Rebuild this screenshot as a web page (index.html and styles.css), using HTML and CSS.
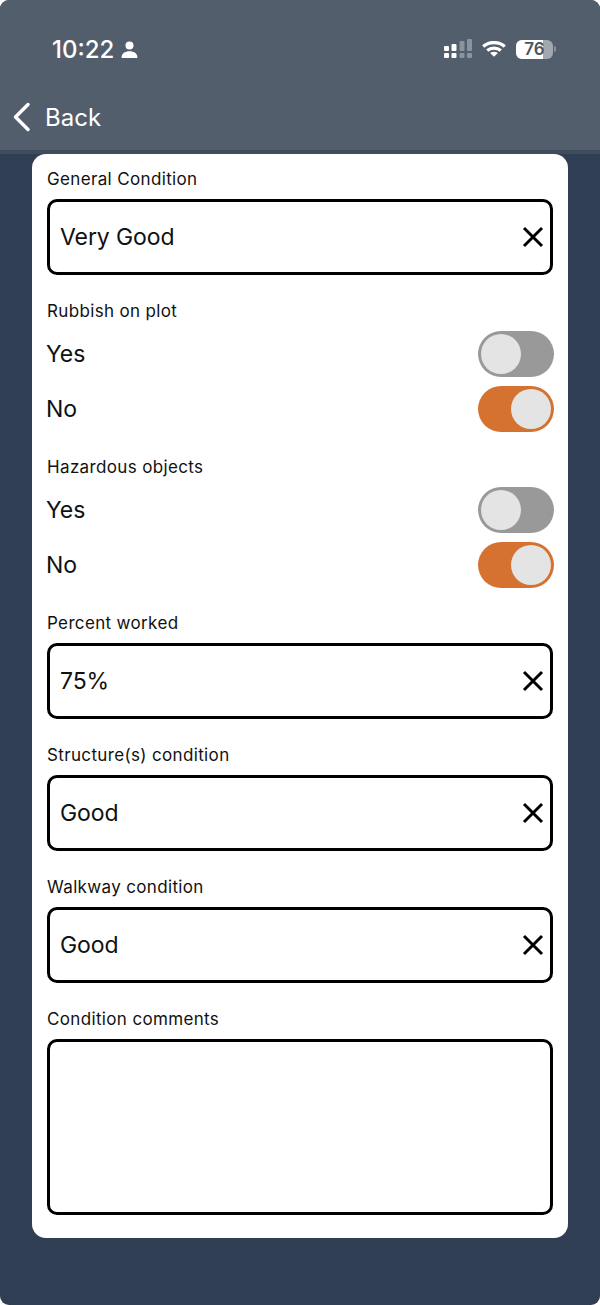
FILE: index.html
```html
<!DOCTYPE html>
<html lang="en">
<head>
  <meta charset="UTF-8">
  <meta name="viewport" content="width=device-width, initial-scale=1.0">
  <title>Condition</title>
  <link rel="stylesheet" href="styles.css">
</head>
<body>
  <div class="screen">
    <header class="topbar">
      <div class="status">
        <div class="status-left">
          <span class="time">10:22</span>
          <svg class="person" width="17" height="17" viewBox="0 0 17 17"><circle cx="8.5" cy="4.6" r="4" fill="#fff"/><path d="M.6 16.4c0-4 3.4-6.2 7.9-6.2s7.900 2.200 7.900 6.200c0 .4-.3.6-.7.6H1.300c-.4 0-.7-.2-.7-.6z" fill="#fff"/></svg>
        </div>
        <div class="status-right">
          <svg width="29" height="20" viewBox="-1 0 29 20">
            <g fill="#fff">
              <rect x="0" y="7" width="5" height="5" rx="1"/>
              <rect x="0" y="14" width="5" height="5" rx="1"/>
              <rect x="7.500" y="5" width="5" height="7" rx="1"/>
              <rect x="7.500" y="14" width="5" height="5" rx="1"/>
            </g>
            <g fill="#8b939e">
              <rect x="15.500" y="2" width="5" height="10" rx="1"/>
              <rect x="15.500" y="14" width="5" height="5" rx="1"/>
              <rect x="23" y="0" width="5" height="12" rx="1"/>
              <rect x="23" y="14" width="5" height="5" rx="1"/>
            </g>
          </svg>
          <svg class="wifi" width="24" height="16" viewBox="0 0 24 16" fill="none" stroke="#fff" stroke-width="3.200">
            <path d="M1.200 5.400C7.300.3 16.700.3 22.800 5.400"/>
            <path d="M5.200 9.500c3.900-3.200 9.700-3.200 13.600 0"/>
            <path d="M12 15.800l-3.900-3.900c2.300-1.600 5.500-1.600 7.800 0z" fill="#fff" stroke="none"/>
          </svg>
          <div class="battery">
            <div class="battery-body"><span class="battery-fill"></span><span class="battery-num">76</span></div>
            <span class="battery-tip"></span>
          </div>
        </div>
      </div>
      <div class="nav">
        <svg width="20" height="30" viewBox="0 0 20 30" fill="none" stroke="#fff" stroke-width="3.500" stroke-linecap="round" stroke-linejoin="round"><path d="M16 2.500L3.500 15 16 27.500"/></svg>
        <span class="back">Back</span>
      </div>
    </header>

    <main class="card">
      <section class="field">
        <label class="label">General Condition</label>
        <div class="input tall">
          <span>Very Good</span>
          <svg class="clear" width="22" height="22" viewBox="0 0 22 22"><path d="M2 2l18 18M20 2L2 20"/></svg>
        </div>
      </section>

      <section class="field">
        <label class="label">Rubbish on plot</label>
        <div class="options">
          <div class="option"><span>Yes</span><span class="toggle"><span class="knob"></span></span></div>
          <div class="option"><span>No</span><span class="toggle on"><span class="knob"></span></span></div>
        </div>
      </section>

      <section class="field">
        <label class="label">Hazardous objects</label>
        <div class="options">
          <div class="option"><span>Yes</span><span class="toggle"><span class="knob"></span></span></div>
          <div class="option"><span>No</span><span class="toggle on"><span class="knob"></span></span></div>
        </div>
      </section>

      <section class="field">
        <label class="label">Percent worked</label>
        <div class="input">
          <span>75%</span>
          <svg class="clear" width="22" height="22" viewBox="0 0 22 22"><path d="M2 2l18 18M20 2L2 20"/></svg>
        </div>
      </section>

      <section class="field">
        <label class="label">Structure(s) condition</label>
        <div class="input">
          <span>Good</span>
          <svg class="clear" width="22" height="22" viewBox="0 0 22 22"><path d="M2 2l18 18M20 2L2 20"/></svg>
        </div>
      </section>

      <section class="field">
        <label class="label">Walkway condition</label>
        <div class="input">
          <span>Good</span>
          <svg class="clear" width="22" height="22" viewBox="0 0 22 22"><path d="M2 2l18 18M20 2L2 20"/></svg>
        </div>
      </section>

      <section class="field">
        <label class="label">Condition comments</label>
        <div class="textarea"></div>
      </section>
    </main>
  </div>
</body>
</html>
```

FILE: styles.css
```css
* {
  box-sizing: border-box;
}
html, body {
  margin: 0;
  height: 100%;
  background: #fff;
}
body {
  font-family: Inter, "Liberation Sans", sans-serif;
  color: #111;
}
.screen {
  height: 1305px;
  background: #2f3e52;
  border-radius: 9px;
  overflow: hidden;
}
.topbar {
  height: 154px;
  background: #535e6c;
  border-bottom: 4px solid #3f4c5e;
  color: #fff;
}
.status {
  display: flex;
  justify-content: space-between;
  align-items: center;
  height: 98px;
  padding: 0 44px 0 52px;
}
.status-left {
  display: flex;
  align-items: center;
  gap: 7px;
}
.time {
  font-size: 24px;
  font-weight: 500;
}
.person {
  margin-top: 1px;
}
.status-right {
  display: flex;
  align-items: center;
  gap: 10px;
}
.battery {
  display: flex;
  align-items: center;
  gap: 1px;
}
.battery-body {
  position: relative;
  width: 37px;
  height: 19px;
  border-radius: 6px;
  background: #a2a8b0;
  overflow: hidden;
  display: flex;
  align-items: center;
  justify-content: center;
}
.battery-fill {
  position: absolute;
  left: 0;
  top: 0;
  bottom: 0;
  width: 73%;
  background: #fff;
}
.battery-num {
  position: relative;
  font-size: 17px;
  font-weight: 600;
  color: #4b5562;
}
.battery-tip {
  width: 2px;
  height: 6px;
  border-radius: 0 2px 2px 0;
  background: #8b939e;
}
.nav {
  display: flex;
  align-items: center;
  gap: 13px;
  padding-left: 12px;
  height: 38px;
}
.back {
  font-size: 24px;
}
.card {
  width: 536px;
  height: 1084px;
  margin: 0 32px;
  padding: 15px 15px 0;
  background: #fff;
  border-radius: 14px;
  display: flex;
  flex-direction: column;
  gap: 25px;
}
.label {
  display: block;
  height: 20px;
  line-height: 20px;
  font-size: 17px;
  letter-spacing: 0.35px;
  margin-bottom: 10px;
}
.input {
  display: flex;
  justify-content: space-between;
  align-items: center;
  height: 76px;
  margin-bottom: 1px;
  padding: 0 6px 0 10px;
  border: 3px solid #000;
  border-radius: 10px;
  font-size: 23px;
  letter-spacing: -0.1px;
  color: #111;
}
.clear {
  fill: none;
  stroke: #000;
  stroke-width: 3;
}
.textarea {
  height: 176px;
  border: 3px solid #000;
  border-radius: 10px;
}
.options {
  display: flex;
  flex-direction: column;
  gap: 9px;
}
.option {
  display: flex;
  justify-content: space-between;
  align-items: center;
  height: 46px;
  margin-left: -1px;
  font-size: 23px;
}
.toggle {
  display: flex;
  align-items: center;
  width: 76px;
  height: 46px;
  margin-right: -1px;
  padding: 3px;
  border-radius: 23px;
  background: #999;
}
.toggle.on {
  justify-content: flex-end;
  background: #d57230;
}
.knob {
  width: 40px;
  height: 40px;
  border-radius: 50%;
  background: #e4e4e4;
}
```
